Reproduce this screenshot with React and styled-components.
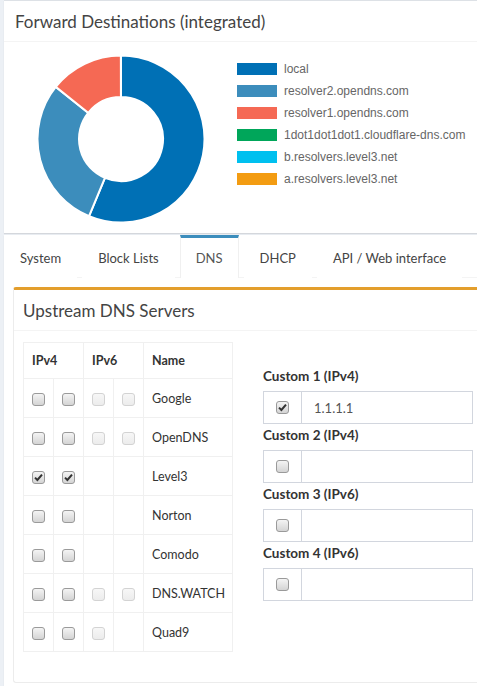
import React from 'react';
import styled, { createGlobalStyle } from 'styled-components';

const GlobalStyle = createGlobalStyle`
  html, body {
    margin: 0;
    padding: 0;
    background: #ecf0f5;
    overflow: hidden;
  }
  body {
    font-family: Lato, "Open Sans", sans-serif;
    color: #333;
  }
`;

const Page = styled.div`
  width: 490px;
  padding-left: 4px;
  display: flex;
  flex-direction: column;
  gap: 2px;
`;

const Box = styled.section`
  background: #fff;
  border-top: 1px solid #dde1e6;
  box-shadow: 0 1px 1px rgba(0, 0, 0, 0.1);
`;

const BoxHeader = styled.div`
  display: flex;
  align-items: center;
  height: 40px;
  padding: 0 ${p => p.pad || 11}px;
  border-bottom: 1px solid #f4f4f4;
`;

const BoxTitle = styled.h3`
  margin: 0;
  font-size: 17px;
  font-weight: 400;
  color: #444;
`;

const ChartBody = styled.div`
  display: flex;
  align-items: flex-start;
  height: 179px;
  padding: 12px 0 0 32px;
`;

const Legend = styled.ul`
  list-style: none;
  margin: 4px 0 0 31px;
  padding: 0;
`;

const LegendItem = styled.li`
  display: flex;
  align-items: center;
  height: 22px;
  font-family: "Liberation Sans", Arial, sans-serif;
  font-size: 12px;
  color: #666;
`;

const Swatch = styled.span`
  width: 40px;
  height: 12px;
  margin-right: 7px;
  background: ${p => p.color};
`;

const TabsWrap = styled.div`
  background: #fff;
  box-shadow: 0 1px 1px rgba(0, 0, 0, 0.1);
`;

const TabList = styled.ul`
  list-style: none;
  display: flex;
  margin: 0;
  padding: 0;
  border-bottom: 1px solid #f4f4f4;
`;

const Tab = styled.li`
  margin-right: 5px;
  margin-bottom: -1px;
  border-top: 3px solid ${p => (p.active ? '#3c8dbc' : 'transparent')};
  border-left: 1px solid ${p => (p.active ? '#f0f0f0' : 'transparent')};
  border-right: 1px solid ${p => (p.active ? '#f0f0f0' : 'transparent')};
  background: #fff;
  padding: 10px 15px;
  line-height: 20px;
  font-size: 13px;
  color: ${p => (p.active ? '#555' : '#444')};
`;

const TabContent = styled.div`
  padding: 9px 0 3px 9px;
`;

const SettingsBox = styled.section`
  background: #fff;
  border-top: 3px solid #e39e2c;
  border-left: 1px solid #ececec;
  border-bottom: 1px solid #ececec;
  border-radius: 3px;
`;

const SettingsBody = styled.div`
  display: grid;
  grid-template-columns: 209px 210px;
  column-gap: 31px;
  align-items: start;
  padding: 11px 10px 30px 9px;
`;

const Table = styled.table`
  border-collapse: collapse;
  table-layout: fixed;
  width: 209px;
  font-size: 12.5px;
  color: #333;
`;

const Col = styled.col`
  width: ${p => p.w}px;
`;

const Th = styled.th`
  height: 36px;
  box-sizing: border-box;
  padding: 0 8px;
  text-align: left;
  font-weight: 700;
  border: 1px solid #f0f0f0;
`;

const Td = styled.td`
  height: 39px;
  box-sizing: border-box;
  padding: ${p => (p.name ? '0 8px' : '0')};
  text-align: ${p => (p.name ? 'left' : 'center')};
  border: 1px solid #f0f0f0;
  white-space: nowrap;
`;

const Box13 = styled.span`
  display: inline-flex;
  align-items: center;
  justify-content: center;
  width: 13px;
  height: 13px;
  box-sizing: border-box;
  vertical-align: middle;
  border: 1px solid ${p => (p.disabled ? '#d3d3d3' : '#9a9a9a')};
  border-radius: 3px;
  background: ${p =>
    p.disabled
      ? 'linear-gradient(#f7f7f7, #ececec)'
      : 'linear-gradient(#f4f4f4, #d4d4d4)'};
`;

const CustomCol = styled.div`
  margin-top: 23px;
  display: flex;
  flex-direction: column;
`;

const CustomLabel = styled.label`
  display: block;
  font-size: 13.5px;
  font-weight: 700;
  line-height: 23px;
  margin-bottom: 3px;
  color: #333;
`;

const InputGroup = styled.div`
  display: flex;
  height: 33px;
  box-sizing: border-box;
  border: 1px solid #d2d6de;
`;

const Addon = styled.div`
  width: 37px;
  display: flex;
  align-items: center;
  justify-content: center;
  border-right: 1px solid #d2d6de;
`;

const Input = styled.div`
  flex: 1;
  display: flex;
  align-items: center;
  padding-left: 12px;
  font-size: 13px;
  color: #555;
`;

const Checkbox = ({ checked, disabled }) => (
  <Box13 disabled={disabled}>
    {checked && (
      <svg width="9" height="9" viewBox="0 0 9 9">
        <path d="M1 4.6 L3.4 7 L8 1.6" fill="none" stroke="#333" strokeWidth="2" />
      </svg>
    )}
  </Box13>
);

const slices = [
  { label: 'local', color: '#0070b5', from: 0, to: 202.5 },
  { label: 'resolver2.opendns.com', color: '#3c8dbc', from: 202.5, to: 308.6 },
  { label: 'resolver1.opendns.com', color: '#f56954', from: 308.6, to: 359.9 },
  { label: '1dot1dot1dot1.cloudflare-dns.com', color: '#00a65a' },
  { label: 'b.resolvers.level3.net', color: '#00c0ef' },
  { label: 'a.resolvers.level3.net', color: '#f39c12' },
];

const arcPath = (cx, cy, r1, r2, a0, a1) => {
  const pt = (r, a) => {
    const t = ((a - 90) * Math.PI) / 180;
    return [cx + r * Math.cos(t), cy + r * Math.sin(t)];
  };
  const large = a1 - a0 > 180 ? 1 : 0;
  const [x0, y0] = pt(r2, a0);
  const [x1, y1] = pt(r2, a1);
  const [x2, y2] = pt(r1, a1);
  const [x3, y3] = pt(r1, a0);
  return `M${x0} ${y0} A${r2} ${r2} 0 ${large} 1 ${x1} ${y1} L${x2} ${y2} A${r1} ${r1} 0 ${large} 0 ${x3} ${y3}Z`;
};

const Donut = () => (
  <svg width="170" height="170" viewBox="0 0 170 170">
    {slices
      .filter(s => s.to)
      .map(s => (
        <path
          key={s.label}
          d={arcPath(85, 85, 42, 83.5, s.from, s.to)}
          fill={s.color}
          stroke="#fff"
          strokeWidth="2"
        />
      ))}
  </svg>
);

// [ipv4a, ipv4b, ipv6a, ipv6b]: 'c' checked, 'e' empty, 'd' disabled, null none
const servers = [
  { name: 'Google', cells: ['e', 'e', 'd', 'd'] },
  { name: 'OpenDNS', cells: ['e', 'e', 'd', 'd'] },
  { name: 'Level3', cells: ['c', 'c', null, null] },
  { name: 'Norton', cells: ['e', 'e', null, null] },
  { name: 'Comodo', cells: ['e', 'e', null, null] },
  { name: 'DNS.WATCH', cells: ['e', 'e', 'd', 'd'] },
  { name: 'Quad9', cells: ['e', 'e', 'd', null] },
];

const customs = [
  { label: 'Custom 1 (IPv4)', checked: true, value: '1.1.1.1' },
  { label: 'Custom 2 (IPv4)' },
  { label: 'Custom 3 (IPv6)' },
  { label: 'Custom 4 (IPv6)' },
];

const tabs = ['System', 'Block Lists', 'DNS', 'DHCP', 'API / Web interface'];

export default function App() {
  return (
    <>
      <GlobalStyle />
      <Page>
        <Box>
          <BoxHeader>
            <BoxTitle>Forward Destinations (integrated)</BoxTitle>
          </BoxHeader>
          <ChartBody>
            <Donut />
            <Legend>
              {slices.map(s => (
                <LegendItem key={s.label}>
                  <Swatch color={s.color} />
                  {s.label}
                </LegendItem>
              ))}
            </Legend>
          </ChartBody>
        </Box>

        <TabsWrap>
          <TabList>
            {tabs.map(t => (
              <Tab key={t} active={t === 'DNS'}>
                {t}
              </Tab>
            ))}
          </TabList>
          <TabContent>
            <SettingsBox>
              <BoxHeader pad={9}>
                <BoxTitle>Upstream DNS Servers</BoxTitle>
              </BoxHeader>
              <SettingsBody>
                <Table>
                  <colgroup>
                    <Col w={30} />
                    <Col w={30} />
                    <Col w={30} />
                    <Col w={30} />
                    <Col w={89} />
                  </colgroup>
                  <thead>
                    <tr>
                      <Th colSpan={2}>IPv4</Th>
                      <Th colSpan={2}>IPv6</Th>
                      <Th>Name</Th>
                    </tr>
                  </thead>
                  <tbody>
                    {servers.map(s => (
                      <tr key={s.name}>
                        {s.cells.map((c, i) => (
                          <Td key={i}>
                            {c && <Checkbox checked={c === 'c'} disabled={c === 'd'} />}
                          </Td>
                        ))}
                        <Td name>{s.name}</Td>
                      </tr>
                    ))}
                  </tbody>
                </Table>
                <CustomCol>
                  {customs.map(c => (
                    <div key={c.label}>
                      <CustomLabel>{c.label}</CustomLabel>
                      <InputGroup>
                        <Addon>
                          <Checkbox checked={c.checked} />
                        </Addon>
                        <Input>{c.value}</Input>
                      </InputGroup>
                    </div>
                  ))}
                </CustomCol>
              </SettingsBody>
            </SettingsBox>
          </TabContent>
        </TabsWrap>
      </Page>
    </>
  );
}
